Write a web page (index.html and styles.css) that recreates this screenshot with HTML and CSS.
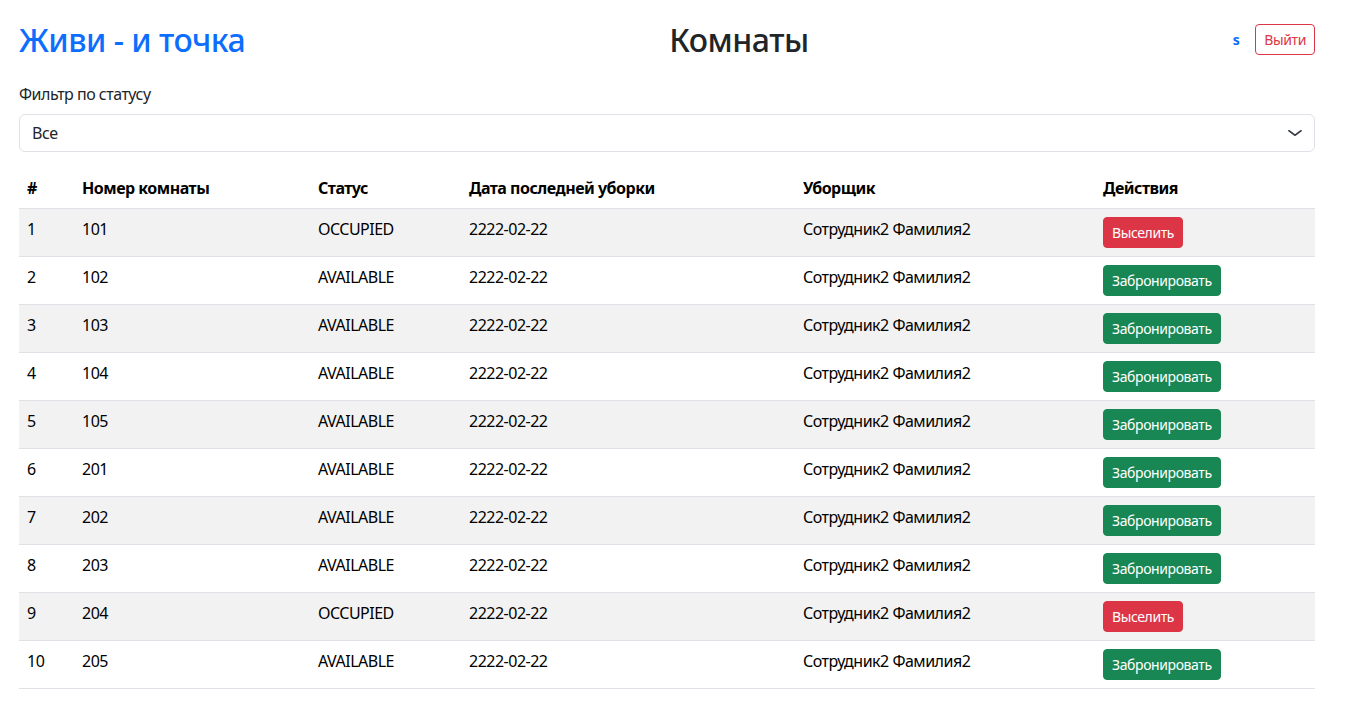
FILE: index.html
```html
<!DOCTYPE html>
<html lang="ru">
<head>
<meta charset="utf-8">
<title>Комнаты</title>
<link rel="stylesheet" href="styles.css">
</head>
<body>
<div class="page">
  <header class="topbar">
    <h1 class="brand">Живи - и точка</h1>
    <h1 class="title">Комнаты</h1>
    <div class="user">
      <span class="user-name">s</span>
      <button class="btn btn-outline-danger">Выйти</button>
    </div>
  </header>

  <div class="filter">
    <label class="filter-label" for="status">Фильтр по статусу</label>
    <div class="select-wrap">
      <select id="status" class="select">
        <option>Все</option>
      </select>
      <svg class="chevron" width="16" height="12" viewBox="0 0 16 16" preserveAspectRatio="none"><path fill="none" stroke="#343a40" stroke-linecap="round" stroke-linejoin="round" stroke-width="2" d="m2 5 6 6 6-6"/></svg>
    </div>
  </div>

  <table class="rooms">
    <colgroup>
      <col class="c1"><col class="c2"><col class="c3"><col class="c4"><col class="c5"><col class="c6">
    </colgroup>
    <thead>
      <tr><th>#</th><th>Номер комнаты</th><th>Статус</th><th>Дата последней уборки</th><th>Уборщик</th><th>Действия</th></tr>
    </thead>
    <tbody>
      <tr><td>1</td><td>101</td><td>OCCUPIED</td><td>2222-02-22</td><td>Сотрудник2 Фамилия2</td><td><button class="btn btn-danger">Выселить</button></td></tr>
      <tr><td>2</td><td>102</td><td>AVAILABLE</td><td>2222-02-22</td><td>Сотрудник2 Фамилия2</td><td><button class="btn btn-success">Забронировать</button></td></tr>
      <tr><td>3</td><td>103</td><td>AVAILABLE</td><td>2222-02-22</td><td>Сотрудник2 Фамилия2</td><td><button class="btn btn-success">Забронировать</button></td></tr>
      <tr><td>4</td><td>104</td><td>AVAILABLE</td><td>2222-02-22</td><td>Сотрудник2 Фамилия2</td><td><button class="btn btn-success">Забронировать</button></td></tr>
      <tr><td>5</td><td>105</td><td>AVAILABLE</td><td>2222-02-22</td><td>Сотрудник2 Фамилия2</td><td><button class="btn btn-success">Забронировать</button></td></tr>
      <tr><td>6</td><td>201</td><td>AVAILABLE</td><td>2222-02-22</td><td>Сотрудник2 Фамилия2</td><td><button class="btn btn-success">Забронировать</button></td></tr>
      <tr><td>7</td><td>202</td><td>AVAILABLE</td><td>2222-02-22</td><td>Сотрудник2 Фамилия2</td><td><button class="btn btn-success">Забронировать</button></td></tr>
      <tr><td>8</td><td>203</td><td>AVAILABLE</td><td>2222-02-22</td><td>Сотрудник2 Фамилия2</td><td><button class="btn btn-success">Забронировать</button></td></tr>
      <tr><td>9</td><td>204</td><td>OCCUPIED</td><td>2222-02-22</td><td>Сотрудник2 Фамилия2</td><td><button class="btn btn-danger">Выселить</button></td></tr>
      <tr><td>10</td><td>205</td><td>AVAILABLE</td><td>2222-02-22</td><td>Сотрудник2 Фамилия2</td><td><button class="btn btn-success">Забронировать</button></td></tr>
    </tbody>
  </table>
</div>
</body>
</html>
```

FILE: styles.css
```css
* { box-sizing: border-box; }
html, body { margin: 0; padding: 0; background: #fff; }
body {
  font-family: "Noto Sans", "Open Sans", sans-serif;
  font-size: 16px;
  line-height: 1.5;
  letter-spacing: -0.5px;
  color: #212529;
}
.page {
  width: 1296px;
  margin-left: 19px;
  padding-top: 18px;
}
.topbar {
  display: flex;
  justify-content: space-between;
  align-items: center;
  height: 42px;
  margin-bottom: 22px;
}
.brand, .title {
  margin: 0;
  padding-top: 2px;
  font-size: 32px;
  font-weight: 500;
  line-height: 1.2;
  letter-spacing: -0.5px;
}
.brand { color: #0d6efd; }
.title { color: #212529; }
.user { display: flex; align-items: center; }
.user-name {
  color: #0d6efd;
  font-weight: 700;
  font-size: 14px;
  margin-right: 16px;
}
.btn {
  font-family: inherit;
  font-size: 14px;
  line-height: 1.5;
  letter-spacing: -0.4px;
  padding: 4px 8px;
  border: 1px solid transparent;
  border-radius: 4px;
  cursor: pointer;
  background: transparent;
}
.btn-outline-danger { color: #dc3545; border-color: #dc3545; }
.btn-danger { color: #fff; background: #dc3545; border-color: #dc3545; }
.btn-success { color: #fff; background: #198754; border-color: #198754; }

.filter { margin-bottom: 16px; }
.filter-label { display: block; margin-bottom: 8px; }
.select-wrap { position: relative; }
.select {
  display: block;
  width: 100%;
  height: 38px;
  padding: 6px 36px 6px 12px;
  font-family: inherit;
  font-size: 16px;
  line-height: 1.5;
  letter-spacing: -0.5px;
  color: #212529;
  background: #fff;
  border: 1px solid #dee2e6;
  border-radius: 6px;
  appearance: none;
  -webkit-appearance: none;
}
.chevron {
  position: absolute;
  right: 12px;
  top: 13px;
  pointer-events: none;
}

.rooms {
  width: 100%;
  border-collapse: collapse;
  color: #000;
  vertical-align: top;
}
.c1 { width: 55px; }
.c2 { width: 236px; }
.c3 { width: 151px; }
.c4 { width: 334px; }
.c5 { width: 300px; }
.c6 { width: 220px; }
.rooms th, .rooms td {
  padding: 8px;
  text-align: left;
  border-bottom: 1px solid #dee2e6;
  vertical-align: top;
}
.rooms th { font-weight: 700; }
.rooms tbody tr:nth-child(odd) td { background: #f2f2f2; }
```
